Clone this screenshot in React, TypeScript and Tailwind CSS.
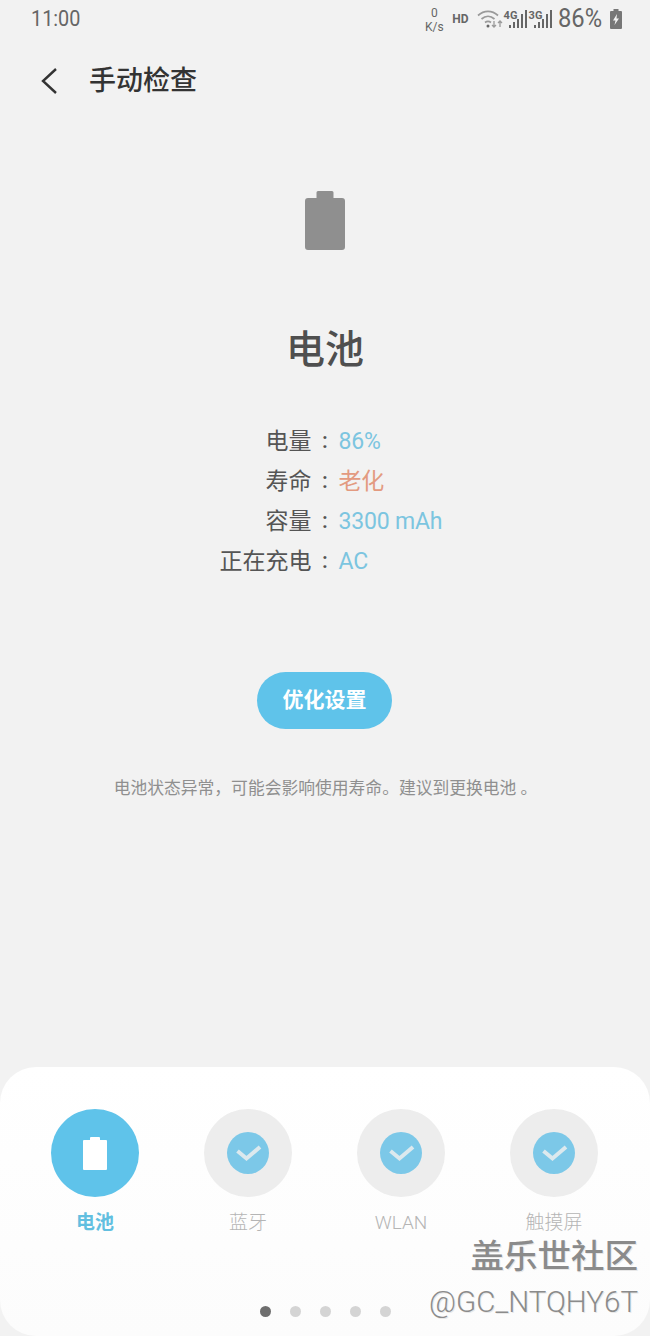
import React from 'react';

const cjk = "font-['Roboto','Noto_Sans_CJK_SC',sans-serif]";

const Signal = ({ label }: { label: string }) => (
  <div className="relative h-[20px] w-[24px]">
    <span className="absolute left-0 top-[1px] text-[11px] leading-[11px] font-bold text-[#666]">{label}</span>
    <svg width="24" height="20" viewBox="0 0 24 20" className="absolute left-0 top-0" fill="#666">
      <rect x="5" y="16" width="2" height="3" />
      <rect x="9" y="13" width="2" height="6" />
      <rect x="13" y="10" width="2" height="9" />
      <rect x="17" y="5" width="2" height="14" />
      <rect x="21" y="1" width="2" height="18" />
    </svg>
  </div>
);

const StatusBar = () => (
  <div className="flex h-[37px] items-center justify-between pl-[31px] pr-[28px] text-[#666]">
    <span className="origin-left scale-x-90 text-[22px] leading-none">11:00</span>
    <div className="flex items-center">
      <div className="mt-[3px] flex w-[20px] flex-col items-center text-[12px] leading-[14px]">
        <span>0</span>
        <span>K/s</span>
      </div>
      <span className="ml-[8px] text-[12px] font-bold">HD</span>
      <svg width="26" height="22" viewBox="0 0 26 22" className="ml-[8px]" fill="none" stroke="#9a9a9a" strokeWidth="1.7">
        <path d="M1 7.500C7 2 15 2 21 7.500" />
        <path d="M4.500 11C8.500 7.500 13.500 7.500 17.500 11" />
        <path d="M8 14.500C10 13 12 13 14 14.500" />
        <circle cx="11" cy="18" r="1.500" fill="#666" stroke="none" />
        <path d="M17 13v6M15 17l2 2 2-2M23 19v-6M21 15l2-2 2 2" strokeWidth="1.3" />
      </svg>
      <div className="ml-[1px] flex gap-[1px]">
        <Signal label="4G" />
        <Signal label="3G" />
      </div>
      <span className="ml-[5px] origin-left scale-x-95 text-[25px] leading-none text-[#666]">86%</span>
      <svg width="12" height="20" viewBox="0 0 12 20" className="ml-[6px]">
        <path d="M3.500 0h5v2H11a1 1 0 0 1 1 1v16a1 1 0 0 1-1 1H1a1 1 0 0 1-1-1V3a1 1 0 0 1 1-1h2.500z" fill="#777" />
        <path d="M7 5L3 11.500h2.500L4.500 16 9 9.500H6.500z" fill="#f2f2f2" />
      </svg>
    </div>
  </div>
);

const rows = [
  { label: '电量', value: '86%', color: 'text-[#7cc5e0]' },
  { label: '寿命', value: '老化', color: 'text-[#e39a80]' },
  { label: '容量', value: '3300 mAh', color: 'text-[#7cc5e0]' },
  { label: '正在充电', value: 'AC', color: 'text-[#7cc5e0]' }
];

const tabs = [
  { label: '电池', active: true },
  { label: '蓝牙', active: false },
  { label: 'WLAN', active: false },
  { label: '触摸屏', active: false }
];

const App: React.FC = () => {
  return (
    <div className={`relative flex min-h-[1336px] w-[650px] flex-col overflow-hidden bg-[#f2f2f2] ${cjk}`}>
      <StatusBar />

      <div className="mt-[20px] flex h-[48px] items-center pl-[38px]">
        <svg width="24" height="30" viewBox="0 0 24 30" fill="none" stroke="#333" strokeWidth="2.4">
          <path d="M18 3L5 15l13 12" />
        </svg>
        <h1 className="ml-[27px] text-[27px] leading-none font-medium text-[#333]">手动检查</h1>
      </div>

      <main className="flex flex-1 flex-col items-center">
        <svg width="40" height="59" viewBox="0 0 40 59" className="mt-[86px]" fill="#8f8f8f">
          <path d="M13 0h14a1.500 1.500 0 0 1 1.500 1.500V7H37a3 3 0 0 1 3 3v46a3 3 0 0 1-3 3H3a3 3 0 0 1-3-3V10a3 3 0 0 1 3-3h8.500V1.500A1.500 1.500 0 0 1 13 0z" />
        </svg>

        <h2 className="mt-[73px] text-[39px] leading-[54px] font-medium text-[#4f4f4f]">电池</h2>

        <div className="mt-[45px] grid w-full grid-cols-[1fr_27px_1fr]">
          {rows.map((row) => (
            <React.Fragment key={row.label}>
              <span className="h-[40px] text-right text-[23px] leading-[40px] text-[#555]">{row.label}</span>
              <span className="h-[40px] text-center text-[22px] leading-[38px] font-medium text-[#555]">:</span>
              <span className={`h-[40px] whitespace-pre text-[23px] leading-[40px] tracking-[-0.2px] ${row.color}`}>{row.value}</span>
            </React.Fragment>
          ))}
        </div>

        <button className="mr-[1px] mt-[90px] h-[57px] w-[135px] rounded-full bg-[#5fc3ea] text-[21px] font-bold text-white">
          优化设置
        </button>

        <p className="mt-[47px] whitespace-pre pl-[1px] text-[16.8px] leading-[24px] text-[#8f8f8f]">
          电池状态异常，可能会影响使用寿命。建议到更换电池 。
        </p>
      </main>

      <section className="flex h-[269px] flex-col rounded-[36px] bg-gradient-to-b from-white to-[#fcfcfc] pt-[42px]">
        <div className="flex pl-[18px]">
          {tabs.map((tab) => (
            <div key={tab.label} className="flex w-[153px] flex-col items-center">
              {tab.active ? (
                <div className="flex h-[88px] w-[88px] items-center justify-center rounded-full bg-[#5fc3ea]">
                  <svg width="24" height="33" viewBox="0 0 24 33" fill="#fff">
                    <path d="M8 0h8a1 1 0 0 1 1 1v2h6a1 1 0 0 1 1 1v28a1 1 0 0 1-1 1H1a1 1 0 0 1-1-1V4a1 1 0 0 1 1-1h6V1a1 1 0 0 1 1-1z" />
                  </svg>
                </div>
              ) : (
                <div className="flex h-[88px] w-[88px] items-center justify-center rounded-full bg-[#ededed]">
                  <svg width="42" height="42" viewBox="0 0 42 42">
                    <circle cx="21" cy="21" r="21" fill="#7cc8e8" />
                    <path d="M10.500 19l9 7.500L33 15" fill="none" stroke="#dce9ee" strokeWidth="4" />
                  </svg>
                </div>
              )}
              <span className={`ml-[1px] mt-[13px] text-[19px] leading-[26px] ${tab.active ? 'font-bold text-[#62bfe0]' : 'font-light text-[#b5b5b5]'}`}>
                {tab.label}
              </span>
            </div>
          ))}
        </div>

        <div className="mt-[70px] flex justify-center gap-[19px]">
          {[0, 1, 2, 3, 4].map((i) => (
            <span key={i} className={`h-[11px] w-[11px] rounded-full ${i === 0 ? 'bg-[#6e6e6e]' : 'bg-[#d4d4d4]'}`} />
          ))}
        </div>
      </section>

      {/* watermark sits on top of the sheet */}
      <div className="absolute bottom-[17px] right-[12px] flex flex-col items-end text-[#8b8b8b] [text-shadow:1px_1px_0_#e8e8e8]">
        <span className="text-[33.500px] leading-[40px] font-medium">盖乐世社区</span>
        <span className="mt-[8px] text-[29.500px] leading-[34px] font-light">@GC_NTQHY6T</span>
      </div>
    </div>
  );
};

export default App;
